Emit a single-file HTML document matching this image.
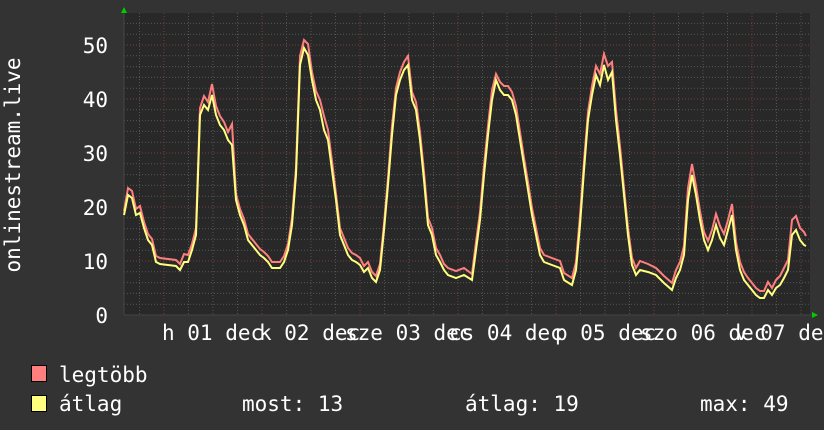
<!DOCTYPE html>
<html><head><meta charset="utf-8"><style>
html,body{margin:0;padding:0;background:#333;}
svg{display:block}
text{font-family:"DejaVu Sans Mono","Liberation Mono",monospace;fill:#fff;}
</style></head><body>
<svg width="824" height="430" viewBox="0 0 824 430">
<rect width="824" height="430" fill="#333"/>
<rect x="124" y="13" width="686" height="302" fill="#282828"/>
<g stroke="#555" stroke-width="1" stroke-dasharray="1,2">
<line x1="124" x2="810" y1="304.2" y2="304.2"/><line x1="124" x2="810" y1="293.4" y2="293.4"/><line x1="124" x2="810" y1="282.6" y2="282.6"/><line x1="124" x2="810" y1="271.8" y2="271.8"/>
<line x1="124" x2="810" y1="250.2" y2="250.2"/><line x1="124" x2="810" y1="239.4" y2="239.4"/><line x1="124" x2="810" y1="228.6" y2="228.6"/><line x1="124" x2="810" y1="217.8" y2="217.8"/>
<line x1="124" x2="810" y1="196.2" y2="196.2"/><line x1="124" x2="810" y1="185.4" y2="185.4"/><line x1="124" x2="810" y1="174.6" y2="174.6"/><line x1="124" x2="810" y1="163.8" y2="163.8"/>
<line x1="124" x2="810" y1="142.2" y2="142.2"/><line x1="124" x2="810" y1="131.4" y2="131.4"/><line x1="124" x2="810" y1="120.6" y2="120.6"/><line x1="124" x2="810" y1="109.8" y2="109.8"/>
<line x1="124" x2="810" y1="88.2" y2="88.2"/><line x1="124" x2="810" y1="77.4" y2="77.4"/><line x1="124" x2="810" y1="66.6" y2="66.6"/><line x1="124" x2="810" y1="55.8" y2="55.8"/>
<line x1="124" x2="810" y1="34.2" y2="34.2"/><line x1="124" x2="810" y1="23.4" y2="23.4"/>
<line y1="13" y2="315" x1="139.5" x2="139.5"/><line y1="13" y2="315" x1="188.5" x2="188.5"/><line y1="13" y2="315" x1="213" x2="213"/><line y1="13" y2="315" x1="237.5" x2="237.5"/>
<line y1="13" y2="315" x1="286.5" x2="286.5"/><line y1="13" y2="315" x1="311" x2="311"/><line y1="13" y2="315" x1="335.5" x2="335.5"/>
<line y1="13" y2="315" x1="384.5" x2="384.5"/><line y1="13" y2="315" x1="409" x2="409"/><line y1="13" y2="315" x1="433.5" x2="433.5"/>
<line y1="13" y2="315" x1="482.5" x2="482.5"/><line y1="13" y2="315" x1="507" x2="507"/><line y1="13" y2="315" x1="531.5" x2="531.5"/>
<line y1="13" y2="315" x1="580.5" x2="580.5"/><line y1="13" y2="315" x1="605" x2="605"/><line y1="13" y2="315" x1="629.5" x2="629.5"/>
<line y1="13" y2="315" x1="678.5" x2="678.5"/><line y1="13" y2="315" x1="703" x2="703"/><line y1="13" y2="315" x1="727.5" x2="727.5"/>
<line y1="13" y2="315" x1="776.5" x2="776.5"/><line y1="13" y2="315" x1="801" x2="801"/>
</g>
<g stroke="#7a3a3a" stroke-width="1" stroke-dasharray="1,2">
<line x1="124" x2="810" y1="261" y2="261"/><line x1="124" x2="810" y1="207" y2="207"/><line x1="124" x2="810" y1="153" y2="153"/><line x1="124" x2="810" y1="99" y2="99"/><line x1="124" x2="810" y1="45" y2="45"/>
<line y1="13" y2="315" x1="164" x2="164"/><line y1="13" y2="315" x1="262" x2="262"/><line y1="13" y2="315" x1="360" x2="360"/><line y1="13" y2="315" x1="458" x2="458"/><line y1="13" y2="315" x1="556" x2="556"/><line y1="13" y2="315" x1="654" x2="654"/><line y1="13" y2="315" x1="752" x2="752"/>
</g>
<line x1="124" y1="315" x2="812" y2="315" stroke="#444"/>
<line x1="124" y1="13" x2="124" y2="315" stroke="#444"/>
<polygon points="121,13 127,13 124,7" fill="#0c0"/>
<polygon points="812,312 812,318 818,315" fill="#0c0"/>
<g fill="none" stroke-width="2">
<polyline stroke="#ff7f7f" transform="translate(0,-4)" points="124,215 128,192 132,195 136,213 140,210 144,226 148,238 152,243 156,260 160,262 168,263 176,264 180,268 184,258 188,259 192,248 196,232 200,112 204,100 208,106 212,88 216,110 220,120 224,126 228,136 232,128 236,198 240,213 244,223 248,238 252,243 256,248 260,253 264,256 268,260 272,266 280,266 284,260 288,248 292,222 296,172 300,60 304,44 308,48 312,76 316,95 320,104 324,120 328,134 332,165 336,198 340,232 344,242 348,252 352,257 356,259 360,262 364,270 368,266 372,276 376,280 380,268 384,228 388,182 392,130 396,92 400,76 404,66 408,60 412,96 416,106 420,136 424,176 428,222 432,232 436,252 440,259 444,268 448,272 456,275 464,272 472,278 476,246 480,216 484,170 488,130 492,94 496,78 500,86 504,90 508,90 512,96 516,110 520,136 524,162 528,186 532,212 536,232 540,252 544,259 552,262 560,265 564,277 572,282 576,266 580,220 584,166 588,116 592,90 596,70 600,78 604,58 608,70 612,66 616,114 620,150 624,192 628,232 632,262 636,272 640,265 648,268 656,272 664,280 672,287 676,274 680,266 684,250 688,192 692,168 696,190 700,215 704,236 708,245 712,234 716,218 720,230 724,238 728,224 732,208 736,246 740,266 744,276 748,282 752,287 756,292 760,295 764,295 768,286 772,292 776,284 780,280 784,272 788,264 792,224 796,220 800,232 804,236 806,240"/>
<polyline stroke="#ffff7f" points="124,215 128,195 132,198 136,215 140,213 144,228 148,240 152,245 156,262 160,264 168,265 176,266 180,270 184,262 188,262 192,250 196,235 200,115 204,105 208,110 212,95 216,115 220,125 224,130 228,140 232,145 236,200 240,215 244,225 248,240 252,245 256,250 260,255 264,258 268,262 272,268 280,268 284,262 288,250 292,225 296,175 300,65 304,48 308,55 312,80 316,100 320,110 324,130 328,140 332,170 336,200 340,235 344,245 348,255 352,260 356,262 360,265 364,272 368,268 372,278 376,282 380,270 384,230 388,185 392,135 396,95 400,80 404,70 408,65 412,100 416,110 420,140 424,180 428,225 432,235 436,255 440,262 444,270 448,275 456,278 464,275 472,280 476,250 480,220 484,175 488,135 492,100 496,80 500,90 504,95 508,95 512,100 516,115 520,140 524,165 528,190 532,215 536,235 540,255 544,262 552,265 560,268 564,280 572,285 576,270 580,225 584,170 588,120 592,95 596,75 600,85 604,65 608,80 612,72 616,120 620,155 624,195 628,235 632,265 636,275 640,270 648,272 656,275 664,283 672,290 676,278 680,270 684,255 688,200 692,175 696,195 700,220 704,240 708,250 712,240 716,225 720,238 724,245 728,230 732,215 736,250 740,270 744,280 748,285 752,290 756,295 760,298 764,298 768,290 772,295 776,288 780,285 784,278 788,270 792,235 796,230 800,240 804,245 806,246"/>
</g>
<g font-size="21" text-anchor="end">
<text x="108" y="323">0</text><text x="108" y="269">10</text><text x="108" y="215">20</text><text x="108" y="161">30</text><text x="108" y="107">40</text><text x="108" y="53">50</text>
</g>
<text transform="translate(20,165) rotate(-90)" font-size="21" text-anchor="middle">onlinestream.live</text>
<g font-size="21">
<text x="162" y="340">h 01 dec</text>
<text x="259" y="340">k 02 dec</text>
<text x="345" y="340">sze 03 dec</text>
<text x="449" y="340">cs 04 dec</text>
<text x="555" y="340">p 05 dec</text>
<text x="640" y="340">szo 06 dec</text>
<text x="735" y="340">v 07 dec</text>
</g>
<rect x="31.5" y="365.5" width="15" height="16" fill="#ff7f7f" stroke="#000"/>
<rect x="31.5" y="395.5" width="15" height="16" fill="#ffff7f" stroke="#000"/>
<g font-size="21">
<text x="59" y="382">legtöbb</text>
<text x="59" y="411">átlag</text>
<text x="242" y="411">most: 13</text>
<text x="465" y="411">átlag: 19</text>
<text x="700" y="411">max: 49</text>
</g>
</svg>
</body></html>
